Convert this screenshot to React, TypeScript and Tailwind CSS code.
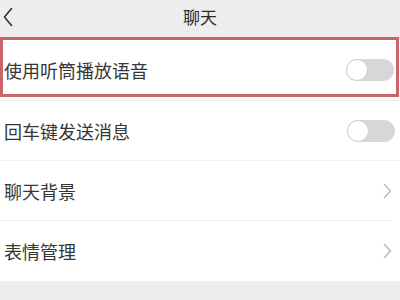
import React from "react";

function Toggle() {
  return (
    <div className="relative h-[22px] w-[48px] rounded-full bg-[#d7d7d7]">
      <div className="absolute left-0 top-0 h-[22px] w-[22px] rounded-full border border-[#d0d0d0] bg-white" />
    </div>
  );
}

function Chevron() {
  return (
    <svg width="9" height="16" viewBox="0 0 9 16" fill="none">
      <path d="M1.5 1.5 L7.5 8 L1.5 14.5" stroke="#bdbdbd" strokeWidth="1.6" strokeLinecap="round" strokeLinejoin="round" />
    </svg>
  );
}

function Row({ label, right, last }: { label: string; right: React.ReactNode; last?: boolean }) {
  return (
    <div className={`flex h-[60px] items-center justify-between bg-white pl-[4px] ${last ? "" : "border-b border-[#f0f0f0]"}`}>
      <span className="text-[18px] leading-none text-[#363636]">{label}</span>
      {right}
    </div>
  );
}

export default function App() {
  return (
    <div
      className="relative h-[300px] w-[400px] overflow-hidden bg-[#ededed]"
      style={{ fontFamily: '"Noto Sans CJK SC", "Noto Sans", sans-serif' }}
    >
      <div className="relative flex h-[40px] items-center justify-center bg-[#ededed]">
        <svg className="absolute left-[3px] top-[7px]" width="10" height="20" viewBox="0 0 10 20" fill="none">
          <path d="M8.5 1.5 L1.5 10 L8.5 18.5" stroke="#333" strokeWidth="1.6" strokeLinecap="round" strokeLinejoin="round" />
        </svg>
        <span className="-mt-[6px] text-[17px] text-[#2a2a2a]">聊天</span>
      </div>
      <div className="bg-white">
        <div className="border-b border-[#f0f0f0]">
          <div className="flex h-[60px] items-center justify-between bg-white pl-[4px] pr-[6px]">
            <span className="text-[18px] leading-none text-[#363636]">使用听筒播放语音</span>
            <Toggle />
          </div>
        </div>
        <div className="flex h-[60px] items-center justify-between border-b border-[#f0f0f0] bg-white pl-[4px] pr-[5px]">
          <span className="text-[18px] leading-none text-[#363636]">回车键发送消息</span>
          <Toggle />
        </div>
        <div className="pr-[8px]">
          <Row label="聊天背景" right={<Chevron />} />
        </div>
        <div className="pr-[8px]">
          <Row label="表情管理" right={<Chevron />} last />
        </div>
      </div>
      <div className="pointer-events-none absolute left-0 top-[37px] h-[60px] w-[399px] border-[3px] border-[#c8646a]" />
    </div>
  );
}
